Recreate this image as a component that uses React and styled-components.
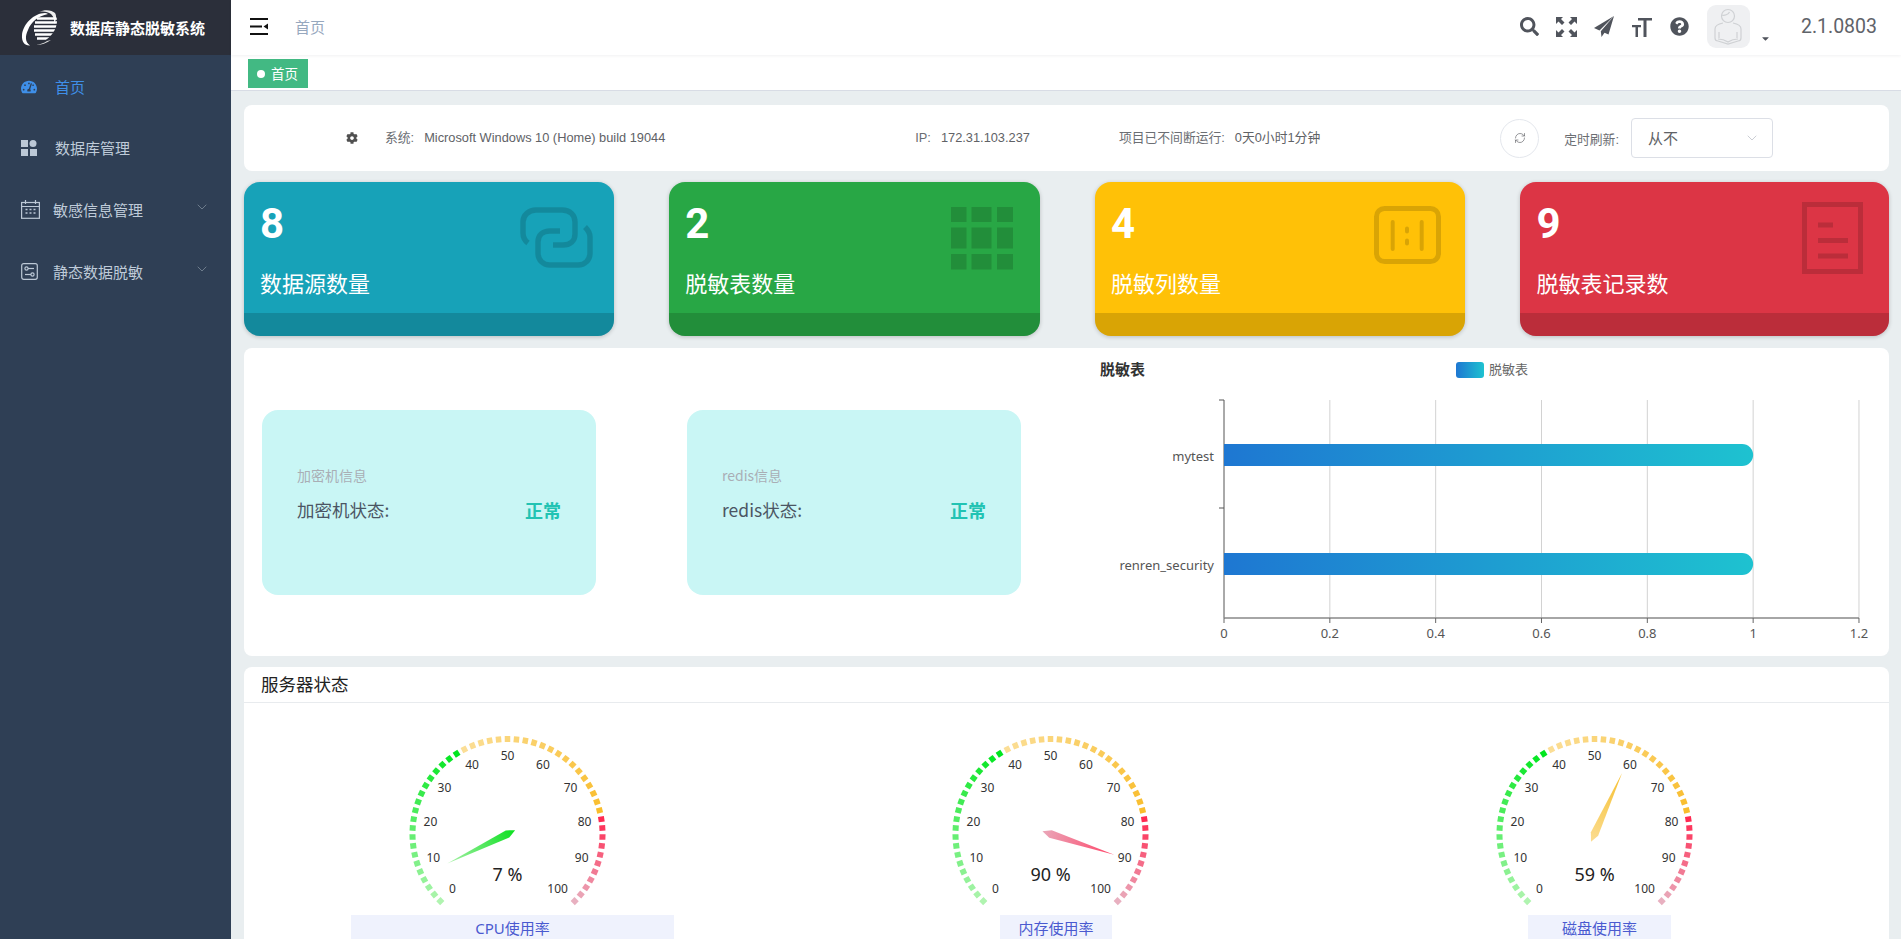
import React from "react";
import styled, { createGlobalStyle } from "styled-components";
import { FaSearch, FaQuestionCircle, FaCog, FaTachometerAlt, FaCaretDown } from "react-icons/fa";
import { RefreshCw, ChevronDown } from "lucide-react";

const SANS = `"Liberation Sans", "Noto Sans CJK SC", sans-serif`;
const UI = `"Noto Sans", "Noto Sans CJK SC", sans-serif`;

const Global = createGlobalStyle`
  html, body { margin: 0; padding: 0; height: 100%; overflow: hidden; }
  body { font-family: ${SANS}; background: #fff; }
  * { box-sizing: border-box; }
`;

const Page = styled.div`display: flex; width: 1901px; height: 939px; overflow: hidden;`;

const Sidebar = styled.aside`width: 231px; flex: none; background: #2f3f55; color: #bfcbd9;`;
const Brand = styled.div`height: 55px; background: #2b2f3a; display: flex; align-items: center; padding-left: 21px; gap: 13px;`;
const BrandTitle = styled.div`color: #fff; font: 700 15px/20px "Noto Sans CJK SC", sans-serif; white-space: nowrap;`;
const Menu = styled.nav`display: flex; flex-direction: column; padding-top: 1px;`;
const MenuItem = styled.div`
  height: 61.6px; display: flex; align-items: center; position: relative;
  padding-left: 21px;
  color: ${p => (p.$active ? "#3f8fe8" : "#bfcbd9")};
  font: 400 15px/20px "Noto Sans CJK SC", sans-serif;
`;
const MenuIcon = styled.span`width: ${p => p.$w}px; display: flex; flex: none; align-items: center;`;
const Chevron = styled.span`margin-left: auto; margin-right: 21px; display: flex; color: #7e8b9b; transform: translateY(-3px);`;

const Main = styled.main`flex: 1; min-width: 0; display: flex; flex-direction: column; background: #e9eef0;`;
const Navbar = styled.header`
  height: 55px; flex: none; background: #fff; display: flex; align-items: center; padding: 0 0 2px 19px;
  box-shadow: 0 1px 3px rgba(0,21,41,.06); position: relative; z-index: 1;
`;
const Crumb = styled.span`margin-left: 27px; color: #97a8be; font: 400 15px/20px "Noto Sans CJK SC", sans-serif;`;
const NavRight = styled.div`margin-left: auto; display: flex; align-items: center; color: #50545c; padding-right: 24px;`;
const NavIcon = styled.span`display: flex; margin-left: ${p => p.$ml || 0}px; color: #50545c;`;
const Avatar = styled.div`
  width: 43px; height: 43px; margin-left: 18px; border-radius: 9px; background: #eff0f2;
  display: flex; align-items: center; justify-content: center;
`;
const Caret = styled.span`display: flex; margin-left: 10px; margin-top: 24px; color: #50545c;`;
const Version = styled.span`margin-left: 30px; font: 400 19.5px/24px Roboto, sans-serif; color: #5f6369;`;

const TagBar = styled.div`height: 36px; flex: none; background: #fff; border-bottom: 1px solid #d8dce5; padding: 4px 0 0 17px;`;
const Tag = styled.div`
  width: 60px; height: 29px; background: #42b983; color: #fff; display: flex; align-items: center;
  padding: 0 0 2px 9px; font: 400 13.500px/20px "Noto Sans CJK SC", sans-serif;
`;
const TagDot = styled.i`width: 8px; height: 8px; background: #fff; border-radius: 50%; margin: 2px 6px 0 0;`;

const Content = styled.div`flex: 1; min-height: 0; padding: 14px 12px 0 13px; display: flex; flex-direction: column; overflow: hidden;`;

const InfoBar = styled.section`
  height: 66px; flex: none; background: #fff; border-radius: 8px; display: flex; align-items: center;
  font: 400 12.800px/16px ${SANS}; color: #606266; padding-left: 102px; margin-bottom: 11px;
`;
const InfoText = styled.span`
  margin-left: ${p => p.$ml || 0}px; white-space: nowrap; color: ${p => (p.$dim ? "#6b6e73" : "#606266")};
  transform: translateY(${p => p.$dy || 0}px);
`;
const GearWrap = styled.span`display: flex; color: #505050;`;
const RefreshBtn = styled.span`
  width: 39px; height: 39px; margin-left: ${p => p.$ml}px; border: 1px solid #e4e7ed; border-radius: 50%;
  display: flex; align-items: center; justify-content: center; color: #606266;
`;
const Select = styled.div`
  width: 142px; height: 40px; margin-left: 12px; border: 1px solid #dcdfe6; border-radius: 4px;
  display: flex; align-items: center; justify-content: space-between; padding: 0 12px 0 16px;
  color: #606266; font: 400 15px/20px "Noto Sans CJK SC", sans-serif;
`;

const Cards = styled.section`display: grid; grid-template-columns: 370px 370.5px 370px 369px; column-gap: 55.3px; margin-bottom: 12px; flex: none;`;
const Card = styled.div`
  height: 154px; border-radius: 16px; background: ${p => p.$bg}; color: #fff; overflow: hidden;
  display: flex; flex-direction: column; box-shadow: 0 1px 4px rgba(0,0,0,.2);
`;
const CardBody = styled.div`flex: 1; display: flex; justify-content: space-between; padding-left: 16px;`;
const CardText = styled.div`padding-top: 21px;`;
const CardNum = styled.div`font: 700 42px/42px Roboto, sans-serif;`;
const CardLabel = styled.div`margin-top: 22px; font: 400 22px/30px "Noto Sans CJK SC", sans-serif; white-space: nowrap;`;
const CardIcon = styled.div`margin: ${p => p.$top}px ${p => p.$right}px 0 0; display: flex;`;
const CardFoot = styled.div`height: 23px; flex: none; background: rgba(0,0,0,.15);`;

const Middle = styled.section`
  height: 308px; flex: none; background: #fff; border-radius: 8px; margin-bottom: 11px;
  display: flex; align-items: center; padding-left: 18px;
`;
const StatusCard = styled.div`
  width: 334px; height: 185px; margin-left: ${p => p.$ml || 0}px; flex: none; border-radius: 16px; background: #c9f6f5;
  padding: 55px 35px 0;
`;
const StatusTitle = styled.div`font: 400 14px/20px "Noto Sans CJK SC", sans-serif; color: #a9aeb5;`;
const StatusRow = styled.div`margin-top: 15px; display: flex; justify-content: space-between; align-items: center; font: 400 17.500px/20px "Noto Sans CJK SC", sans-serif; color: #4b5563;`;
const StatusOk = styled.span`font: 700 18px/20px "Noto Sans CJK SC", sans-serif; color: #22c3b3;`;
const ChartWrap = styled.div`margin-left: 39px; display: flex; width: 829px; height: 308px;`;

const Server = styled.section`flex: 1; min-height: 0; background: #fff; border-radius: 8px 8px 0 0; overflow: hidden;`;
const ServerHead = styled.div`height: 36px; border-bottom: 1px solid #e8ebee; padding-left: 17px; font: 400 17.500px/33px "Noto Sans CJK SC", sans-serif; color: #222;`;
const GaugeGrid = styled.div`display: grid; grid-template-columns: repeat(3, 500px); column-gap: 43.5px; padding: 18px 0 0 18.5px;`;
const GaugeCell = styled.div`display: flex; flex-direction: column; align-items: center;`;
const GaugeTitle = styled.div`
  width: ${p => p.$w}px; height: 24px; background: #eff2fd; color: #4a5ad0; text-align: center;
  font: 400 15px/26px ${UI}; white-space: nowrap;
`;

const mix = (a, b, t) => {
  const c = a.map((x, i) => Math.round(x + (b[i] - x) * t));
  return `rgb(${c[0]},${c[1]},${c[2]})`;
};
const tickColor = v => {
  if (v < 39) return mix([176, 244, 176], [0, 230, 30], v / 38);
  if (v < 79) return mix([251, 222, 150], [249, 189, 44], (v - 40) / 38);
  return mix([255, 42, 82], [232, 176, 192], (v - 80) / 20);
};
const pointerColors = v => {
  if (v < 39) return ["#0ce020", "#a8f0a8"];
  if (v < 79) return ["#fbdc90", "#f6c030"];
  return ["#eaa6b8", "#ff4468"];
};

const CX = 124.5, CY = 113;
function Gauge({ value, id }) {
  const ticks = [];
  for (let v = 0; v <= 100; v += 2) {
    const a = ((225 - 2.7 * v) * Math.PI) / 180;
    ticks.push(
      <line key={v} x1={CX + 92 * Math.cos(a)} y1={CY - 92 * Math.sin(a)} x2={CX + 98 * Math.cos(a)} y2={CY - 98 * Math.sin(a)} stroke={tickColor(v)} strokeWidth="5.500" />
    );
  }
  const labels = [];
  for (let v = 0; v <= 100; v += 10) {
    const a = ((225 - 2.7 * v) * Math.PI) / 180;
    labels.push(
      <text key={v} x={CX + 78 * Math.cos(a) - (v === 100 ? 5 : 0)} y={CY - 78 * Math.sin(a) + 4} textAnchor="middle" fontSize="12" fill="#333" fontFamily={UI}>{v}</text>
    );
  }
  const a = ((225 - 2.7 * value) * Math.PI) / 180;
  const ux = Math.cos(a), uy = -Math.sin(a), nx = -uy, ny = ux;
  const pt = (u, n) => `${CX + ux * u + nx * n},${CY + uy * u + ny * n}`;
  const [c0, c1] = pointerColors(value);
  return (
    <svg width="260" height="194" viewBox="0 0 260 194">
      <defs>
        <linearGradient id={id} gradientUnits="userSpaceOnUse" x1={CX - ux * 8} y1={CY - uy * 8} x2={CX + ux * 67} y2={CY + uy * 67}>
          <stop offset="0" stopColor={c0} />
          <stop offset="1" stopColor={c1} />
        </linearGradient>
      </defs>
      {ticks}
      {labels}
      <polygon points={[pt(67, 0), pt(0, 4), pt(-8.5, 0), pt(0, -4)].join(" ")} fill={`url(#${id})`} />
      <text x={CX} y={CY + 47} textAnchor="middle" fontSize="18" fill="#222" fontFamily={UI}>{value} %</text>
    </svg>
  );
}

function BarChart() {
  const X0 = 164, Y0 = 55, YB = 270, STEP = 105.83;
  const grid = [1, 2, 3, 4, 5, 6].map(i => X0 + STEP * i);
  const txt = { fontFamily: UI, fontSize: 13, fill: "#555" };
  const Bar = ({ y }) => (
    <path d={`M${X0} ${y} H${grid[4] - 11} a11 11 0 0 1 0 22 H${X0} Z`} fill="url(#barGrad)" />
  );
  return (
    <svg width="829" height="308" viewBox="0 0 829 308">
      <defs>
        <linearGradient id="barGrad" x1="0" y1="0" x2="1" y2="0">
          <stop offset="0" stopColor="#1e77d2" />
          <stop offset="1" stopColor="#1ec2d0" />
        </linearGradient>
        <linearGradient id="legGrad" x1="0" y1="0" x2="1" y2="0">
          <stop offset="0" stopColor="#1e77d2" />
          <stop offset="1" stopColor="#1ec2d0" />
        </linearGradient>
      </defs>
      <text x="40" y="27" fontFamily={UI} fontSize="15" fontWeight="700" fill="#333">脱敏表</text>
      <rect x="396" y="14" width="28" height="16" rx="3" fill="url(#legGrad)" />
      <text x="429" y="25.5" {...txt} fill="#666">脱敏表</text>
      {grid.map(x => <line key={x} x1={x} x2={x} y1={Y0 - 3} y2={YB} stroke="#d2d2d2" strokeWidth="1" />)}
      <line x1={X0} x2={X0} y1={Y0 - 3} y2={YB} stroke="#555" strokeWidth="1" />
      <line x1={X0 - 5} x2={X0} y1={Y0 - 3} y2={Y0 - 3} stroke="#555" strokeWidth="1" />
      <line x1={X0 - 5} x2={X0} y1={160} y2={160} stroke="#555" strokeWidth="1" />
      <line x1={X0} x2={grid[5]} y1={YB} y2={YB} stroke="#888" strokeWidth="1.5" />
      {[X0, ...grid].map(x => <line key={x} x1={x} x2={x} y1={YB} y2={YB + 5} stroke="#666" strokeWidth="1" />)}
      <Bar y={96} />
      <Bar y={205} />
      <text x="154" y="113" textAnchor="end" {...txt}>mytest</text>
      <text x="154" y="222" textAnchor="end" {...txt}>renren_security</text>
      {["0", "0.2", "0.4", "0.6", "0.8", "1", "1.2"].map((t, i) => (
        <text key={t} x={X0 + STEP * i} y="290" textAnchor="middle" {...txt}>{t}</text>
      ))}
    </svg>
  );
}

const Logo = () => (
  <svg width="36" height="37" viewBox="0 0 36 37">
    <defs>
      <clipPath id="logoClip">
        <ellipse cx="20" cy="18" rx="19" ry="13" transform="rotate(-48 20 18)" />
      </clipPath>
    </defs>
    <path d="M24 4C13 4 2 15 1 26c-.6 7 3 11 8 10.500C4 33 4 27 7 21 10 13 17 7 27 5c-1-.6-2-1-3-1Z" fill="#fff" />
    <path d="M18 3C24 0 31 1 34 4c2 3 1 8-1 11 .4-4 0-7-3-10-3-2-7-3-12-2Z" fill="#eee" />
    <path d="M30 31c-4 3-10 5-15 5 4-.4 8-2 11-4Z" fill="#ddd" />
    <g clipPath="url(#logoClip)" stroke="#fff" strokeWidth="2.300">
      <path d="M16 9.500h20M14 13.500h22M13 17.500h23M13 21.500h23M14 25.500h22M16 29.500h18" />
    </g>
  </svg>
);
const HamburgerIcon = () => (
  <svg width="18" height="17" viewBox="0 0 18 17" fill="#111">
    <rect x="0" y="0" width="18" height="2" />
    <rect x="0" y="7.500" width="12" height="2" />
    <path d="M13.500 8.500 18 5.500v6Z" />
    <rect x="0" y="15" width="18" height="2" />
  </svg>
);
const FullIcon = () => (
  <svg width="21" height="20" viewBox="0 0 21 20" fill="#50545c">
    <path d="M0 0h7L5 2l3.500 3.500-2.500 2.500L2.500 4.500 0 7ZM21 0h-7l2 2-3.500 3.500 2.500 2.500 3.500-3.500L21 7ZM0 20h7l-2-2 3.500-3.500-2.500-2.500-3.500 3.500L0 13ZM21 20h-7l2-2-3.500-3.500 2.500-2.500 3.500 3.500 2.500-2.500Z" />
  </svg>
);
const PlaneIcon = () => (
  <svg width="20" height="21" viewBox="0 0 20 21" fill="#50545c">
    <path d="M20 0 0 12l5.500 2.500Z" />
    <path d="M20 0 6.800 15.200 7.500 21l3-4.200 4 1.700Z" />
  </svg>
);
const FontIcon = () => (
  <svg width="20" height="20" viewBox="0 0 20 20" fill="#50545c">
    <path d="M6 1h14v2.500h-5.500V20h-3V3.500H6Z" />
    <path d="M0 8h9v2.200H6V20H3.500V10.200H0Z" />
  </svg>
);
const AvatarIcon = () => (
  <svg width="30" height="38" viewBox="0 0 30 38" fill="none" stroke="#cfd1d4" strokeWidth="1.200">
    <circle cx="15" cy="8" r="6.500" />
    <path d="M8.500 7c3 1 7-.5 8-3" />
    <path d="M10 15c-5 1-8 3-8 6v9c0 2 1 3 3 3l10 3 10-3c2 0 3-1 3-3v-9c0-3-3-5-8-6" />
    <path d="M6 24v6M24 24v6M5 31c4 0 7 1 10 3 3-2 6-3 10-3" />
  </svg>
);
const GridMenuIcon = () => (
  <svg width="16" height="16" viewBox="0 0 16 16" fill="#bcc8d6">
    <rect x="0" y="0" width="7" height="7" />
    <circle cx="12" cy="3.500" r="3.500" />
    <rect x="0" y="9" width="7" height="7" />
    <rect x="9" y="9" width="7" height="7" />
  </svg>
);
const CalIcon = () => (
  <svg width="19" height="19" viewBox="0 0 19 19" fill="none" stroke="#bcc8d6" strokeWidth="1.200">
    <rect x=".6" y="2.500" width="17.800" height="15.800" />
    <path d="M.6 6.500h17.800M4.500 0v4M14.500 0v4" />
    <path d="M4.500 9.500h2M8.500 9.500h2M12.500 9.500h2M4.500 13h2M8.500 13h2M12.500 13h2" strokeWidth="1.600" />
  </svg>
);
const SliderIcon = () => (
  <svg width="17" height="17" viewBox="0 0 17 17" fill="none" stroke="#bcc8d6" strokeWidth="1.200">
    <rect x=".7" y=".7" width="15.600" height="15.600" rx="2" />
    <circle cx="5.500" cy="5.500" r="1.600" />
    <path d="M7 5.500h6" />
    <circle cx="11.500" cy="11.500" r="1.600" />
    <path d="M4 11.500h6" />
  </svg>
);

const iconStroke = "rgba(0,0,0,.15)";
const LinkIcon = () => (
  <svg width="73" height="61" viewBox="0 0 73 61" fill="none" stroke={iconStroke} strokeWidth="5.500">
    <path d="M8 36C4 33 3 30 3 26V15C3 8 9 3 16 3H42C50 3 55 8 55 15V27C55 34 50 38 43 38H33" />
    <path d="M65 20C68 23 70 26 70 30V46C70 53 65 58 58 58H30C23 58 18 53 18 46V35C18 28 23 24 30 24H40" />
  </svg>
);
const TableIcon = () => {
  const xs = [[0, 15.500], [20.500, 20], [46, 16]];
  const ys = [[0, 15], [20.500, 21], [47, 15.500]];
  return (
    <svg width="62" height="63" viewBox="0 0 62 63" fill={iconStroke}>
      {xs.flatMap(([x, w]) => ys.map(([y, h]) => <rect key={`${x}-${y}`} x={x} y={y} width={w} height={h} />))}
    </svg>
  );
};
const RatioIcon = () => (
  <svg width="67" height="58" viewBox="0 0 67 58" fill="none" stroke={iconStroke} strokeWidth="5">
    <rect x="2.500" y="2.500" width="62" height="53" rx="8" />
    <path d="M18.700 16v27M47.700 16v27" strokeLinecap="round" strokeWidth="4" />
    <path d="M33 22.500v3M33 34.500v3" strokeLinecap="round" strokeWidth="4" />
  </svg>
);
const DocIcon = () => (
  <svg width="61" height="72" viewBox="0 0 61 72" fill="none" stroke={iconStroke} strokeWidth="5">
    <rect x="2.500" y="2.500" width="56" height="67" />
    <path d="M16 23h15M16 38.500h30M16 54h30" />
  </svg>
);

const cards = [
  { n: 8, label: "数据源数量", bg: "#17a2b8", top: 25, right: 21, icon: <LinkIcon /> },
  { n: 2, label: "脱敏表数量", bg: "#28a745", top: 25, right: 27, icon: <TableIcon /> },
  { n: 4, label: "脱敏列数量", bg: "#ffc107", top: 24, right: 24, icon: <RatioIcon /> },
  { n: 9, label: "脱敏表记录数", bg: "#dc3545", top: 20, right: 26, icon: <DocIcon /> },
];

export default function App() {
  return (
    <Page>
      <Global />
      <Sidebar>
        <Brand><Logo /><BrandTitle>数据库静态脱敏系统</BrandTitle></Brand>
        <Menu>
          <MenuItem $active><MenuIcon $w={34}><FaTachometerAlt size={16} color="#3f8fe8" /></MenuIcon>首页</MenuItem>
          <MenuItem><MenuIcon $w={34}><GridMenuIcon /></MenuIcon>数据库管理</MenuItem>
          <MenuItem><MenuIcon $w={32}><CalIcon /></MenuIcon>敏感信息管理<Chevron><ChevronDown size={16} strokeWidth={1.2} /></Chevron></MenuItem>
          <MenuItem><MenuIcon $w={32}><SliderIcon /></MenuIcon>静态数据脱敏<Chevron><ChevronDown size={16} strokeWidth={1.2} /></Chevron></MenuItem>
        </Menu>
      </Sidebar>
      <Main>
        <Navbar>
          <HamburgerIcon />
          <Crumb>首页</Crumb>
          <NavRight>
            <NavIcon><FaSearch size={19} /></NavIcon>
            <NavIcon $ml={17}><FullIcon /></NavIcon>
            <NavIcon $ml={17}><PlaneIcon /></NavIcon>
            <NavIcon $ml={18}><FontIcon /></NavIcon>
            <NavIcon $ml={18}><FaQuestionCircle size={19} /></NavIcon>
            <Avatar><AvatarIcon /></Avatar>
            <Caret><FaCaretDown size={11} /></Caret>
            <Version>2.1.0803</Version>
          </NavRight>
        </Navbar>
        <TagBar><Tag><TagDot />首页</Tag></TagBar>
        <Content>
          <InfoBar>
            <GearWrap><FaCog size={12} /></GearWrap>
            <InfoText $ml={27} $dim>系统:</InfoText>
            <InfoText $ml={10}>Microsoft Windows 10 (Home) build 19044</InfoText>
            <InfoText $ml={250} $dim>IP:</InfoText>
            <InfoText $ml={10}>172.31.103.237</InfoText>
            <InfoText $ml={89} $dim>项目已不间断运行:</InfoText>
            <InfoText $ml={10}>0天0小时1分钟</InfoText>
            <RefreshBtn $ml={180}><RefreshCw size={12} strokeWidth={1.300} /></RefreshBtn>
            <InfoText $ml={25} $dim $dy={2}>定时刷新:</InfoText>
            <Select>从不<ChevronDown size={16} strokeWidth={1.100} color="#b8bcc4" /></Select>
          </InfoBar>
          <Cards>
            {cards.map(c => (
              <Card key={c.label} $bg={c.bg}>
                <CardBody>
                  <CardText>
                    <CardNum>{c.n}</CardNum>
                    <CardLabel>{c.label}</CardLabel>
                  </CardText>
                  <CardIcon $top={c.top} $right={c.right}>{c.icon}</CardIcon>
                </CardBody>
                <CardFoot />
              </Card>
            ))}
          </Cards>
          <Middle>
            <StatusCard>
              <StatusTitle>加密机信息</StatusTitle>
              <StatusRow>加密机状态:<StatusOk>正常</StatusOk></StatusRow>
            </StatusCard>
            <StatusCard $ml={91}>
              <StatusTitle>redis信息</StatusTitle>
              <StatusRow>redis状态:<StatusOk>正常</StatusOk></StatusRow>
            </StatusCard>
            <ChartWrap><BarChart /></ChartWrap>
          </Middle>
          <Server>
            <ServerHead>服务器状态</ServerHead>
            <GaugeGrid>
              <GaugeCell><Gauge value={7} id="g1" /><GaugeTitle $w={323}>CPU使用率</GaugeTitle></GaugeCell>
              <GaugeCell><Gauge value={90} id="g2" /><GaugeTitle $w={112}>内存使用率</GaugeTitle></GaugeCell>
              <GaugeCell><Gauge value={59} id="g3" /><GaugeTitle $w={143}>磁盘使用率</GaugeTitle></GaugeCell>
            </GaugeGrid>
          </Server>
        </Content>
      </Main>
    </Page>
  );
}
